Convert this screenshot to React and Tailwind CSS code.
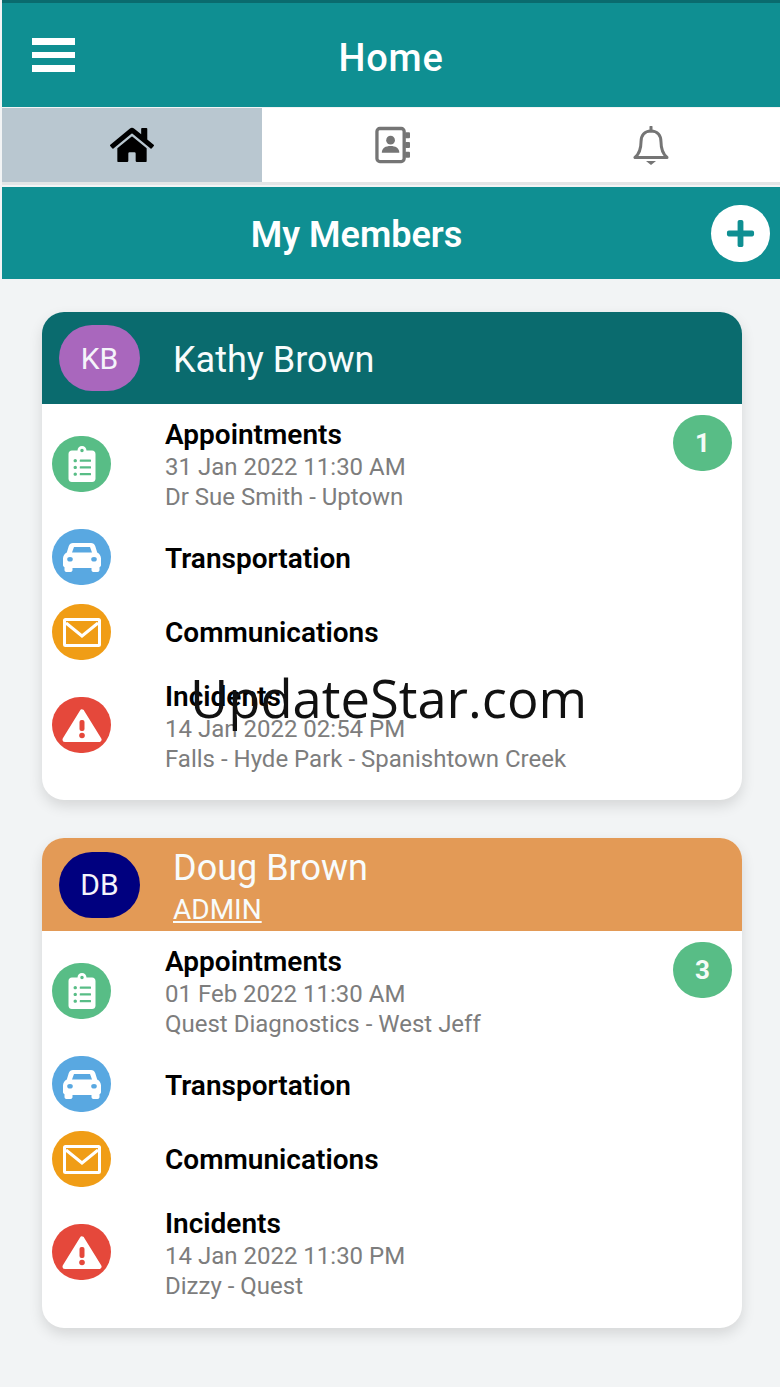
import React from 'react';
import { FaHome, FaClipboardList, FaPlus } from 'react-icons/fa';

const ContactBook = () => (
  <svg width="35" height="38" viewBox="0 0 36 38">
    <rect x="2" y="2" width="28" height="34" rx="3" fill="none" stroke="#757575" strokeWidth="3.4" />
    <circle cx="16" cy="14" r="4.5" fill="#757575" />
    <path d="M7 27c0-5 4-7 9-7s9 2 9 7z" fill="#757575" />
    <rect x="31" y="6" width="5" height="6" rx="1" fill="#757575" />
    <rect x="31" y="16" width="5" height="6" rx="1" fill="#757575" />
    <rect x="31" y="26" width="5" height="6" rx="1" fill="#757575" />
  </svg>
);

const BellIcon = () => (
  <svg width="36" height="39" viewBox="0 0 36 39" fill="none" stroke="#757575" strokeWidth="3" strokeLinejoin="round">
    <path d="M18 5c-6.500 0-10 4.500-10 11 0 8-2 12-6 15.500h32c-4-3.500-6-7.500-6-15.500 0-6.500-3.500-11-10-11z" />
    <path d="M18 1v4" strokeLinecap="round" />
    <path d="M13 35h10l-5 4z" fill="#757575" stroke="none" />
  </svg>
);

const CarIcon = () => (
  <svg width="38" height="29" viewBox="0 0 38 29">
    <path
      fillRule="evenodd"
      fill="#fff"
      d="M10 0h18c2 0 3.500 1 4.200 3l2 6.500C36.500 10.500 38 13 38 15.500V22c0 1-.5 1.800-1.500 2.200V27c0 1-.8 2-2 2h-4c-1.200 0-2-1-2-2v-2H9.500v2c0 1-.8 2-2 2h-4c-1.200 0-2-1-2-2v-2.800C.5 23.800 0 23 0 22v-6.500C0 13 1.500 10.500 3.800 9.500l2-6.500C6.500 1 8 0 10 0zM11 4L9 9.500h20L27 4zM7 14a2.800 2.300 0 1 0 0 4.600a2.800 2.300 0 1 0 0-4.600zM31 14a2.800 2.300 0 1 0 0 4.600a2.800 2.300 0 1 0 0-4.600z"
    />
  </svg>
);

const Envelope = () => (
  <svg width="38" height="29" viewBox="0 0 38 29" fill="none" stroke="#fff" strokeWidth="3">
    <rect x="1.500" y="1.500" width="35" height="26" rx="1" />
    <path d="M3 5l16 13L35 5" />
  </svg>
);

const Warning = () => (
  <svg width="40" height="33" viewBox="0 0 40 33">
    <path d="M20 3L37 30.500H3z" fill="#fff" stroke="#fff" strokeWidth="5" strokeLinejoin="round" />
    <rect x="17.500" y="11" width="5" height="11" rx="2" fill="#e5483b" />
    <circle cx="20" cy="26.500" r="2.800" fill="#e5483b" />
  </svg>
);

const IconCircle = ({ color, children }) => (
  <div className={`w-[59px] h-14 rounded-full shrink-0 flex items-center justify-center ${color}`}>
    {children}
  </div>
);

const Row = ({ icon, title, line1, line2, badge, textClass }) => (
  <div className={`relative flex items-center ${line1 ? 'h-[92px]' : 'h-14'}`}>
    {icon}
    <div className={`ml-[54px] ${textClass}`}>
      <div className="text-[28px] leading-[30px] font-semibold text-black">{title}</div>
      {line1 && <div className="text-[24px] leading-[30px] text-[#7d7d7d] mt-[2px]">{line1}</div>}
      {line2 && <div className="text-[24px] leading-[30px] text-[#7d7d7d]">{line2}</div>}
    </div>
    {badge && (
      <div className="absolute right-0 top-[-3px] w-[59px] h-14 rounded-full bg-[#58bd86] flex items-center justify-center text-[#f4fbf7] text-[26px] font-bold">
        {badge}
      </div>
    )}
  </div>
);

const MemberCard = ({ initials, name, role, headerColor, avatarColor, appt, incident }) => (
  <div className="bg-white rounded-[22px] shadow-[0_6px_14px_rgba(0,0,0,0.12)] overflow-hidden">
    <div className={`flex items-center pl-[17px] ${role ? 'h-[93px]' : 'h-[92px]'} ${headerColor}`}>
      <div className={`w-[81px] h-[66px] rounded-full flex items-center justify-center text-[#f4f4fa] text-[30px] ${avatarColor}`}>
        {initials}
      </div>
      <div className="ml-[33px] pt-[4px] text-[#f8fcfc]">
        <div className="text-[36px] leading-[40px]">{name}</div>
        {role && <div className="text-[28px] leading-[30px] underline underline-offset-2 mt-[7px]">{role}</div>}
      </div>
    </div>
    <div className={`px-[10px] pt-[14px] flex flex-col gap-[19px] ${role ? 'pb-[30px]' : 'pb-[29px]'}`}>
      <Row
        icon={
          <IconCircle color="bg-[#58bd86]">
            <FaClipboardList color="#fff" size={36} />
          </IconCircle>
        }
        title="Appointments"
        line1={appt[0]}
        line2={appt[1]}
        badge={appt[2]}
        textClass="pt-[3px]"
      />
      <Row
        icon={
          <IconCircle color="bg-[#59a8e1]">
            <CarIcon />
          </IconCircle>
        }
        title="Transportation"
        textClass="pt-[3px]"
      />
      <Row
        icon={
          <IconCircle color="bg-[#f09d16]">
            <Envelope />
          </IconCircle>
        }
        title="Communications"
        textClass="pt-[2px]"
      />
      <Row
        icon={
          <IconCircle color="bg-[#e5483b]">
            <Warning />
          </IconCircle>
        }
        title="Incidents"
        line1={incident[0]}
        line2={incident[1]}
        textClass="pt-[6px]"
      />
    </div>
  </div>
);

export default function App() {
  return (
    <div className="relative h-[1387px] w-[780px] overflow-hidden bg-[#f2f4f5] pl-[2px] font-['Roboto',sans-serif]">
      <div className="h-[3px] bg-[#0a6b6e]" />
      <div className="h-[104px] bg-[#0f8f92] flex items-center pl-[30px]">
        <div className="w-[43px] flex flex-col gap-[7px]">
          <div className="h-[6.500px] bg-white" />
          <div className="h-[6.500px] bg-white" />
          <div className="h-[6.500px] bg-white" />
        </div>
        <div className="flex-1 pr-[73px] pt-[6px] text-center text-white text-[38px] tracking-[0.8px] font-medium">Home</div>
      </div>

      <div className="mt-[1px] h-[77px] bg-white border-b-[3px] border-[#e3e5e6] flex">
        <div className="w-[260px] bg-[#b9c7d0] flex items-center justify-center">
          <FaHome color="#000" size={44} />
        </div>
        <div className="w-[260px] flex items-center justify-center">
          <ContactBook />
        </div>
        <div className="flex-1 flex items-center justify-center">
          <BellIcon />
        </div>
      </div>

      <div className="mt-[2px] h-[92px] bg-[#0f8f92] flex items-center">
        <div className="flex-1 pt-[4px] text-center text-white text-[36px] font-semibold">My Members</div>
        <div className="mr-[10px] w-[59px] h-[57px] rounded-full bg-white flex items-center justify-center">
          <FaPlus color="#0f8f92" size={31} />
        </div>
      </div>

      <div className="pl-[40px] pr-[38px] pt-[33px] flex flex-col gap-[38px]">
        <MemberCard
          initials="KB"
          name="Kathy Brown"
          headerColor="bg-[#0a6b6e]"
          avatarColor="bg-[#a967bd]"
          appt={['31 Jan 2022 11:30 AM', 'Dr Sue Smith - Uptown', '1']}
          incident={['14 Jan 2022 02:54 PM', 'Falls - Hyde Park - Spanishtown Creek']}
        />
        <MemberCard
          initials="DB"
          name="Doug Brown"
          role="ADMIN"
          headerColor="bg-[#e39a56]"
          avatarColor="bg-[#00007f]"
          appt={['01 Feb 2022 11:30 AM', 'Quest Diagnostics - West Jeff', '3']}
          incident={['14 Jan 2022 11:30 PM', 'Dizzy - Quest']}
        />
      </div>

      {/* watermark sits over the first card */}
      <div className="absolute left-[190px] top-[664px] text-[52.500px] leading-[68px] text-[#111] font-['Open_Sans',sans-serif]">
        UpdateStar.com
      </div>
    </div>
  );
}
